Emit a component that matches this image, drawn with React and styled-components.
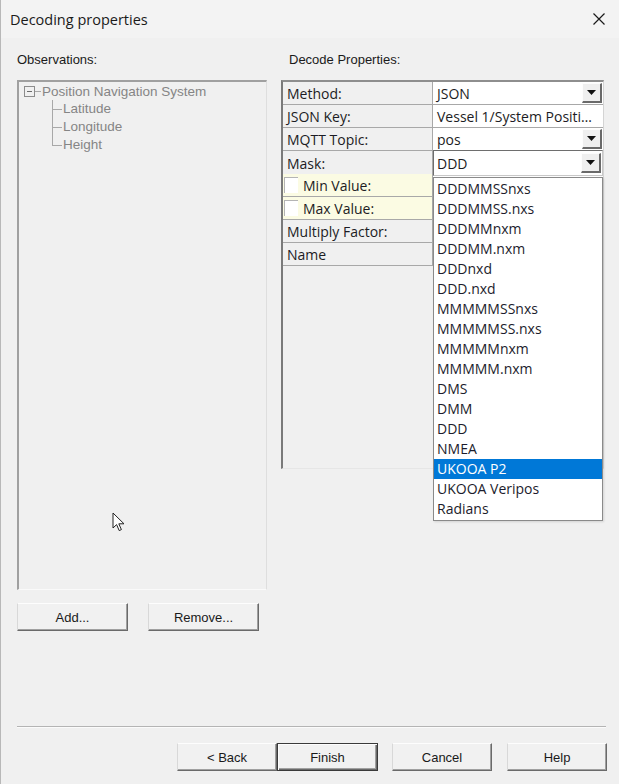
import React from 'react';
import styled, { createGlobalStyle, css } from 'styled-components';

const GlobalStyle = createGlobalStyle`
  html, body { margin: 0; padding: 0; background: #f0f0f0; }
  body { font-family: "Liberation Sans", Arial, sans-serif; }
  #root { width: 619px; height: 784px; }
`;

const Window = styled.div`
  position: relative;
  width: 619px;
  height: 784px;
  box-sizing: border-box;
  background: #f0f0f0;
  border-left: 1px solid #b8b8b8;
  border-bottom-right-radius: 8px;
  display: flex;
  flex-direction: column;
  overflow: hidden;
`;

const TitleBar = styled.div`
  flex: none;
  height: 38px;
  display: flex;
  align-items: center;
  justify-content: space-between;
  padding: 0 14px 0 9px;
  background: #f3f3f3;
  font-family: "Open Sans", sans-serif;
  font-size: 14.5px;
  color: #1a1a1a;
`;

const Body = styled.div`
  flex: 1;
  display: grid;
  grid-template-columns: 250px 323px;
  column-gap: 14px;
  padding: 14px 0 0 16px;
  align-items: start;
`;

const Column = styled.div`
  display: flex;
  flex-direction: column;
`;

const GroupLabel = styled.div`
  height: 16px;
  line-height: 16px;
  margin-bottom: 12px;
  padding-left: ${(p) => p.$indent || 0}px;
  font-size: 13px;
  color: #1a1a1a;
`;

const TreeBox = styled.div`
  height: 510px;
  box-sizing: border-box;
  border-top: 2px solid #a0a0a0;
  border-left: 2px solid #a0a0a0;
  border-right: 1px solid #dedede;
  border-bottom: 1px solid #fafafa;
  padding: 0 0 0 5px;
  color: #858585;
  font-size: 13.5px;
`;

const TreeRow = styled.div`
  height: 18px;
  display: flex;
  align-items: center;
  white-space: nowrap;
`;

const Connector = styled.span`
  width: 6px;
  height: 0;
  border-top: 1px solid #a8a8a8;
  margin-right: 1px;
`;

const ChildList = styled.div`
  margin-left: 28px;
`;

const ChildRow = styled.div`
  position: relative;
  height: 18px;
  line-height: 18px;
  padding-left: 11px;
  &::before {
    content: '';
    position: absolute;
    left: 0;
    top: 9px;
    width: 10px;
    border-top: 1px solid #a8a8a8;
  }
  &::after {
    content: '';
    position: absolute;
    left: 0;
    top: 0;
    height: ${(p) => (p.$last ? '9px' : '18px')};
    border-left: 1px solid #a8a8a8;
  }
`;

const ButtonRow = styled.div`
  display: flex;
  gap: 20px;
  margin-top: 13px;
`;

const Button = styled.button`
  width: ${(p) => p.$w || 100}px;
  height: ${(p) => p.$h || 28}px;
  box-sizing: border-box;
  padding: 0;
  background: #f1f1f1;
  font-family: "Liberation Sans", Arial, sans-serif;
  font-size: 13px;
  color: #1a1a1a;
  border: 1px solid;
  border-color: #fdfdfd #6a6a6a #6a6a6a #d8d8d8;
  box-shadow: inset -1px -1px #a0a0a0;
  ${(p) =>
    p.$default &&
    css`
      border-color: #3a3a3a;
      box-shadow: inset 1px 1px #fdfdfd, inset -1px -1px #6a6a6a, inset -2px -2px #a0a0a0;
    `}
`;

const PropertyGrid = styled.div`
  position: relative;
  height: 389px;
  box-sizing: border-box;
  border-top: 2px solid #8e8e8e;
  border-left: 2px solid #7a7a7a;
  border-right: 1px solid #d4d4d4;
  border-bottom: 1px solid #e6e6e6;
`;

const PropRow = styled.div`
  display: grid;
  grid-template-columns: 150px 1fr;
  height: 23px;
  box-sizing: border-box;
`;

const PropLabel = styled.div`
  display: flex;
  align-items: center;
  gap: 5px;
  padding-left: ${(p) => (p.$check ? 1 : 4)}px;
  border-right: 1px solid #a8a8a8;
  border-bottom: 1px solid #a8a8a8;
  background: ${(p) => (p.$tint ? '#fbfbe3' : '#f0f0f0')};
  font-family: "Open Sans", sans-serif;
  font-size: 14px;
  color: #1c1c24;
  white-space: nowrap;
`;

const CheckSquare = styled.span`
  width: 14px;
  height: 16px;
  box-sizing: border-box;
  background: #fff;
  border-top: 1px solid #b4b4b4;
  border-left: 1px solid #b4b4b4;
`;

const PropValue = styled.div`
  display: flex;
  align-items: center;
  justify-content: space-between;
  padding-left: 4px;
  background: #fff;
  border-bottom: 1px solid #a8a8a8;
  font-family: "Open Sans", sans-serif;
  font-size: 14px;
  color: #1c1c24;
  white-space: nowrap;
  overflow: hidden;
  ${(p) =>
    p.$open &&
    css`
      height: 26px;
      margin-top: -1px;
      box-sizing: border-box;
      border: 1px solid #6e6e6e;
      border-right-color: #c8c8c8;
      border-bottom-color: #c8c8c8;
      padding-left: 3px;
      position: relative;
      z-index: 1;
    `}
`;

const ComboButton = styled.span`
  flex: none;
  width: 20px;
  height: 20px;
  margin-right: 1px;
  box-sizing: border-box;
  display: flex;
  align-items: center;
  justify-content: center;
  background: #efefef;
  border-top: 1px solid #fdfdfd;
  border-left: 1px solid #fdfdfd;
  border-right: 2px solid #6a6a6a;
  border-bottom: 2px solid #6a6a6a;
`;

const DropList = styled.ul`
  position: absolute;
  left: 150px;
  top: 95px;
  width: 170px;
  margin: 0;
  padding: 1px 0;
  list-style: none;
  box-sizing: border-box;
  background: #fff;
  border: 1px solid #8a8a8a;
  box-shadow: 1px 1px 2px rgba(0, 0, 0, 0.12);
  z-index: 2;
`;

const DropItem = styled.li`
  height: 20px;
  line-height: 20px;
  padding-left: 3px;
  font-family: "Open Sans", sans-serif;
  font-size: 14px;
  color: ${(p) => (p.$selected ? '#ffffff' : '#1c1c2c')};
  background: ${(p) => (p.$selected ? '#0078d7' : 'transparent')};
`;

const Separator = styled.div`
  flex: none;
  margin: 0 13px 0 16px;
  height: 0;
  border-top: 1px solid #b4b4b4;
  border-bottom: 1px solid #fbfbfb;
`;

const Footer = styled.div`
  flex: none;
  display: flex;
  justify-content: flex-end;
  padding: 15px 12px 13px 0;
`;

const FooterPair = styled.div`
  display: flex;
  margin-right: 14px;
`;

const FooterGap = styled.div`
  width: 15px;
`;

const Pointer = styled.svg`
  position: absolute;
  left: 111px;
  top: 512px;
`;

const Caret = () => (
  <svg width="9" height="5" viewBox="0 0 9 5">
    <path d="M0 0h9L4.5 5z" fill="#111" />
  </svg>
);

const MinusBox = () => (
  <svg width="11" height="11" viewBox="0 0 11 11">
    <rect x="0.5" y="0.5" width="10" height="10" fill="#f0f0f0" stroke="#8c8c8c" />
    <path d="M3 5.5h5" stroke="#6c6c6c" />
  </svg>
);

const properties = [
  { label: 'Method:', value: 'JSON', combo: true },
  { label: 'JSON Key:', value: 'Vessel 1/System Positi…' },
  { label: 'MQTT Topic:', value: 'pos', combo: true },
  { label: 'Mask:', value: 'DDD', combo: true, open: true },
  { label: 'Min Value:', check: true },
  { label: 'Max Value:', check: true },
  { label: 'Multiply Factor:' },
  { label: 'Name' },
];

const masks = [
  'DDDMMSSnxs',
  'DDDMMSS.nxs',
  'DDDMMnxm',
  'DDDMM.nxm',
  'DDDnxd',
  'DDD.nxd',
  'MMMMMSSnxs',
  'MMMMMSS.nxs',
  'MMMMMnxm',
  'MMMMM.nxm',
  'DMS',
  'DMM',
  'DDD',
  'NMEA',
  'UKOOA P2',
  'UKOOA Veripos',
  'Radians',
];

const children = ['Latitude', 'Longitude', 'Height'];

export default function App() {
  return (
    <>
      <GlobalStyle />
      <Window>
        <TitleBar>
          <span>Decoding properties</span>
          <svg width="12" height="12" viewBox="0 0 12 12">
            <path d="M0.5 0.5l11 11M11.5 0.5l-11 11" stroke="#1a1a1a" strokeWidth="1.2" />
          </svg>
        </TitleBar>

        <Body>
          <Column>
            <GroupLabel>Observations:</GroupLabel>
            <TreeBox>
              <TreeRow>
                <MinusBox />
                <Connector />
                Position Navigation System
              </TreeRow>
              <ChildList>
                {children.map((c, i) => (
                  <ChildRow key={c} $last={i === children.length - 1}>
                    {c}
                  </ChildRow>
                ))}
              </ChildList>
            </TreeBox>
            <ButtonRow>
              <Button $w={111} $h={28}>Add...</Button>
              <Button $w={111} $h={28}>Remove...</Button>
            </ButtonRow>
          </Column>

          <Column>
            <GroupLabel $indent={8}>Decode Properties:</GroupLabel>
            <PropertyGrid>
              {properties.map((p) => (
                <PropRow key={p.label}>
                  <PropLabel $tint={p.check} $check={p.check}>
                    {p.check && <CheckSquare />}
                    {p.label}
                  </PropLabel>
                  <PropValue $open={p.open}>
                    <span>{p.value}</span>
                    {p.combo && (
                      <ComboButton>
                        <Caret />
                      </ComboButton>
                    )}
                  </PropValue>
                </PropRow>
              ))}
              <DropList>
                {masks.map((m, i) => (
                  <DropItem key={i} $selected={m === 'UKOOA P2'}>
                    {m}
                  </DropItem>
                ))}
              </DropList>
            </PropertyGrid>
          </Column>
        </Body>

        <Separator />
        <Footer>
          <FooterPair>
            <Button $w={100}>&lt; Back</Button>
            <Button $w={101} $default>Finish</Button>
          </FooterPair>
          <Button $w={100}>Cancel</Button>
          <FooterGap />
          <Button $w={100}>Help</Button>
        </Footer>

        <Pointer width="13" height="20" viewBox="0 0 13 20">
          <path d="M1 1v15l3.6-3.4 2.6 6 2.2-1-2.6-5.8H12z" fill="#fff" stroke="#222" strokeWidth="1" strokeLinejoin="round" />
        </Pointer>
      </Window>
    </>
  );
}
